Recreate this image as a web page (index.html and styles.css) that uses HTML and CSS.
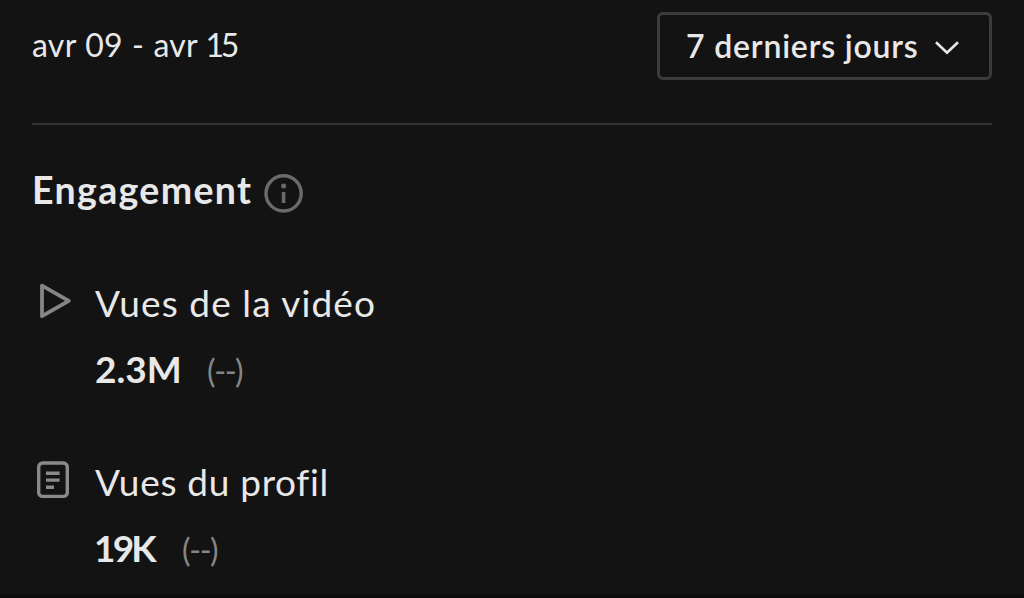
FILE: index.html
```html
<!DOCTYPE html>
<html lang="fr">
<head>
<meta charset="utf-8">
<title>Engagement</title>
<link rel="stylesheet" href="styles.css">
</head>
<body>
<main class="screen">
  <header class="toolbar">
    <span class="date-range">avr 09 - avr <span class="day">15</span></span>
    <button class="period" type="button">
      <span class="period-label">7 derniers jours</span>
      <svg class="chevron" width="26" height="16" viewBox="0 0 26 16" fill="none" stroke="#e8e8e8" stroke-width="2.6"><path d="M2 2.2 13 12.8 24 2.2"/></svg>
    </button>
  </header>
  <section class="engagement">
    <div class="heading">
      <h1 class="title">Engagement</h1>
      <svg class="info" width="40" height="40" viewBox="0 0 40 40" fill="none"><circle cx="19.6" cy="20.4" r="17.6" stroke="#6a6a6a" stroke-width="3.4"/><circle cx="19.6" cy="13" r="2.5" fill="#6a6a6a"/><path d="M19.6 19V30" stroke="#6a6a6a" stroke-width="3.6"/></svg>
    </div>
    <article class="metric">
      <svg class="metric-icon" width="40" height="40" viewBox="0 0 40 40" fill="none" stroke="#858585" stroke-width="3.8" stroke-linejoin="round"><path d="M10 4.7V35.2L36.8 19.8Z"/></svg>
      <div class="metric-body">
        <h2 class="metric-name name-video">Vues de la vidéo</h2>
        <p class="metric-value"><strong class="number number-video">2.3M</strong><span class="change">(--)</span></p>
      </div>
    </article>
    <article class="metric">
      <svg class="metric-icon" width="40" height="40" viewBox="0 0 40 40" fill="none" stroke="#8a8a8a" stroke-width="3.4"><rect x="6.7" y="3" width="28.6" height="33.4" rx="4"/><path d="M14 13.2H27.6M14 20.1H27.6M14 27.2H22"/></svg>
      <div class="metric-body">
        <h2 class="metric-name name-profile">Vues du profil</h2>
        <p class="metric-value"><strong class="number number-profile">19K</strong><span class="change">(--)</span></p>
      </div>
    </article>
  </section>
</main>
</body>
</html>
```
FILE: styles.css
```css
* { box-sizing: border-box; }
body {
  margin: 0;
  background: #131313;
  color: #e8e8e8;
  font-family: Lato, "Open Sans", sans-serif;
}
.screen {
  height: 598px;
  padding: 12px 32px 0;
  overflow: hidden;
  white-space: nowrap;
  border-bottom: 3px solid #0c0c0c;
}
.toolbar {
  display: flex;
  justify-content: space-between;
  height: 113px;
  border-bottom: 2px solid #333;
}
.date-range { font-size: 32px; line-height: 66px; letter-spacing: 0.3px; word-spacing: 0.7px; }
.day { margin-left: -1px; letter-spacing: -3.5px; }
.period {
  display: flex;
  align-items: center;
  justify-content: space-between;
  width: 335px;
  height: 68px;
  padding: 0 29px 0 26px;
  border: 3px solid #3c3c3c;
  border-radius: 6px;
  background: transparent;
  color: inherit;
  font: 600 32px/62px Lato, "Open Sans", sans-serif;
  letter-spacing: 0.8px;
}
.period-label { padding-bottom: 1px; }
.chevron { margin-top: 3px; }
.heading {
  display: flex;
  align-items: center;
  height: 50px;
  margin-top: 40px;
}
.title {
  width: 232px;
  margin: 0;
  font-size: 37.5px;
  font-weight: 700;
  line-height: 52px;
  letter-spacing: 1.35px;
}
.info { margin-top: 6px; }
.metric {
  display: flex;
  gap: 23px;
  height: 179px;
}
.heading + .metric { margin-top: 63px; }
.metric-icon { flex: none; margin-top: 3px; }
.metric-name { margin: 0; font-size: 37px; font-weight: 400; line-height: 50px; }
.name-video { letter-spacing: 1.1px; }
.name-profile { letter-spacing: 0.7px; }
.metric-value {
  display: flex;
  align-items: baseline;
  margin: 16px 0 0;
  line-height: 50px;
}
.number { font-size: 37px; font-weight: 700; }
.number-video { width: 112px; }
.number-profile { width: 87px; letter-spacing: -2.8px; text-indent: -1px; }
.change { color: #858585; font-size: 32px; letter-spacing: -1.4px; }
```
